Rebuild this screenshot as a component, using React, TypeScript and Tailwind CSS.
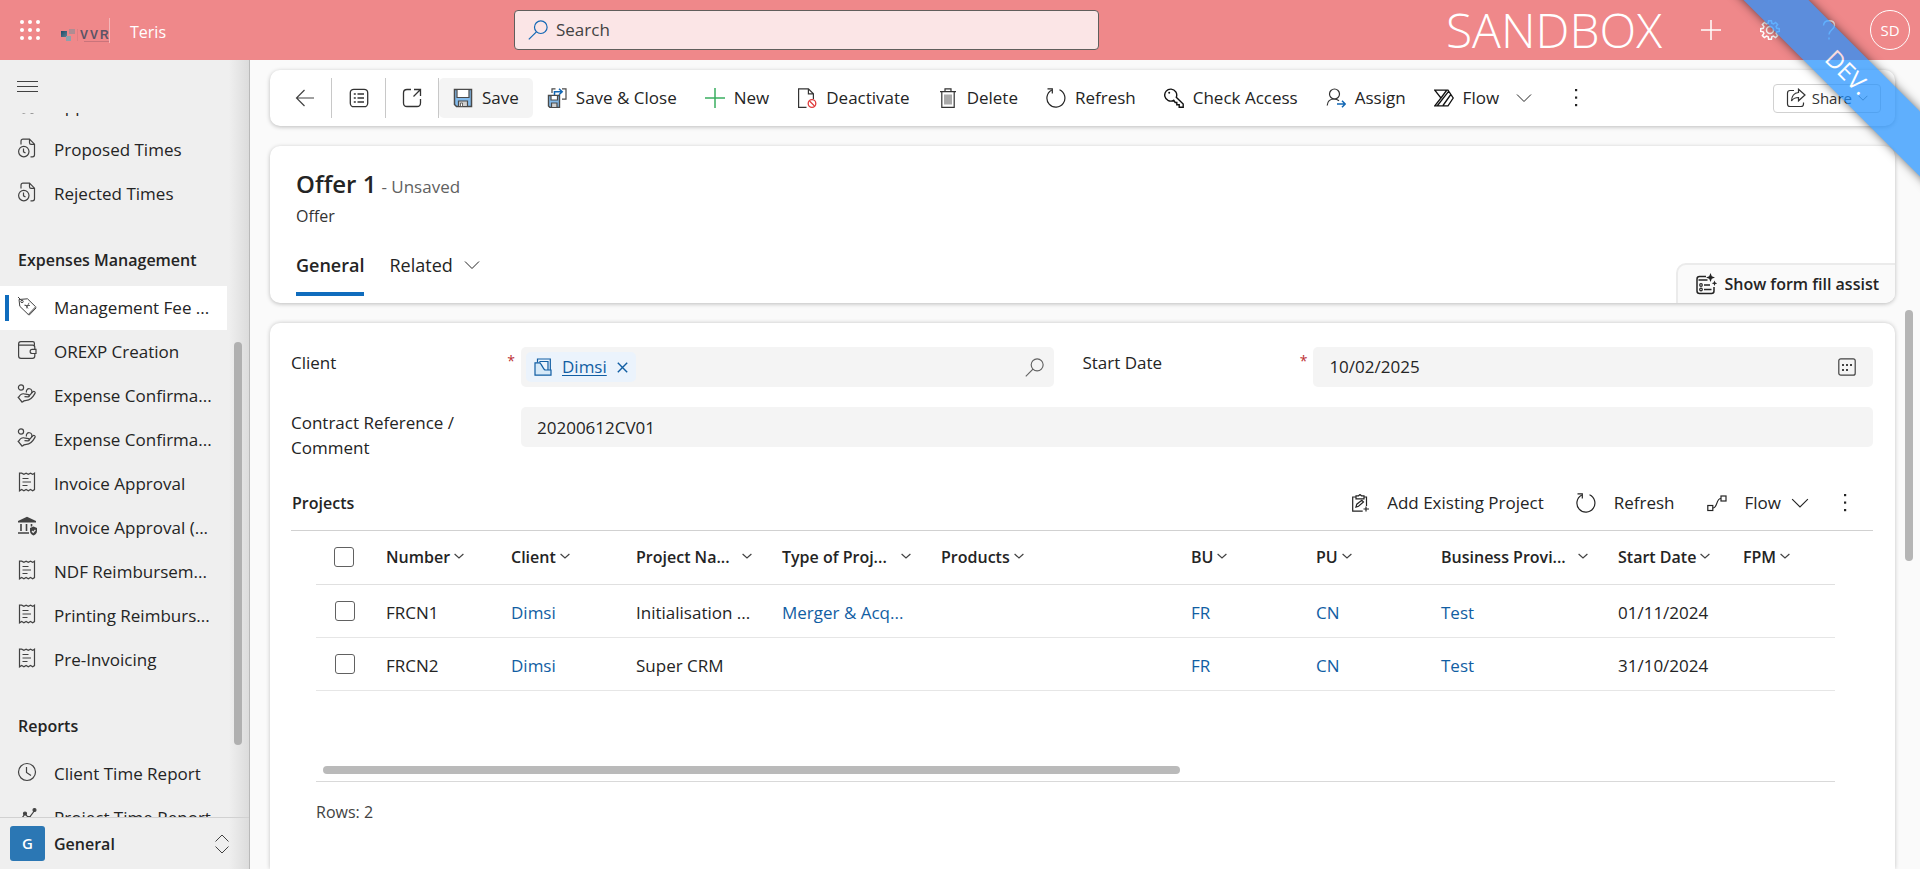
import { useState } from "react";
import type { ReactNode } from "react";

const Icon = ({
  children,
  className = "size-5",
  box = 20,
}: {
  children: ReactNode;
  className?: string;
  box?: number;
}) => (
  <svg
    viewBox={`0 0 ${box} ${box}`}
    className={`shrink-0 ${className}`}
    fill="none"
    stroke="currentColor"
    strokeWidth="1.2"
    aria-hidden="true"
  >
    {children}
  </svg>
);

const TimeDocIcon = () => (
  <Icon>
    <path d="M4 6.5V3.2C4 2 4.8 1.2 6 1.2h6.5l5 5v10.6c0 1.2-.8 2-2 2h-2M12.500 1.500v3.200c0 1 .6 1.600 1.600 1.600h3.200" />
    <circle cx="6.800" cy="13.600" r="5.200" />
    <path d="M6.500 10.500v3.300l2 1.200" />
  </Icon>
);

const TagIcon = () => (
  <Icon>
    <path d="M2 3.500 10.500 2.800l8.200 8-7.400 7.700-8.500-8.200L2 3.500ZM1 1l3.500 3.500M11.300 18.500l1 .5 7-7.300" strokeWidth="1" />
    <circle cx="5" cy="5.500" r="1.200" strokeWidth="1" />
    <path d="M7.500 9.500h5.500M8 8.500l3 4M12 6.800l-2.500 5.500" strokeWidth=".8" />
  </Icon>
);

const WalletIcon = () => (
  <Icon>
    <path d="M1.600 4c0-1.400.8-2.400 2.200-2.400h12c1 0 1.600.6 1.600 1.600v2M1.600 4v12c0 1.500.9 2.400 2.400 2.400h11.500c1.500 0 2.300-.8 2.300-2.300v-2.600M1.600 5.200h14c1.500 0 2.200.8 2.200 2.200v2" />
    <path d="M19 9.400h-3.800a2 2 0 0 0 0 4.100H19Z" />
  </Icon>
);

const HandCoinsIcon = () => (
  <Icon>
    <circle cx="4" cy="3.500" r="2.600" />
    <path d="M9.500 8.500a2.800 2.800 0 1 1 5 .5" />
    <path d="M1.500 13.500c1.500-2.800 3.300-4.200 5.700-3.600l4.300.8c1.500.4 1.200 2.300-.4 2.200l-3.600-.2M11.500 12.500l4.300-4.700c1.200-1.100 2.900.1 2.200 1.600-2 3.600-4.600 6.900-8.600 6.900-2 0-3 .2-4 1.800M.8 12.800l4.600 5.700" />
  </Icon>
);

const InvoiceIcon = () => (
  <Icon>
    <path d="M2.500 1.200v17.600l2.200-1.400 2.200 1.400 2.200-1.400 2.200 1.400 2.200-1.400 2.200 1.400 1.800-1.200V1.200l-1.800 1.200-2.200-1.200-2.200 1.200-2.200-1.200-2.200 1.200-2.200-1.200Z" />
    <path d="M5.500 6.500h6M5.500 10h8.500M5.500 13.500h5" />
  </Icon>
);

const BankIcon = () => (
  <Icon>
    <path d="M10 .8 1 5v1.500h18V5Z" fill="currentColor" stroke="none" />
    <path d="M4 8v7M9.500 8v7M14.500 8v2.500M1 17h11" strokeWidth="1.600" />
    <path d="M16.500 10.500 20 12v3c0 2.200-1.500 3.800-3.500 4.500C14.500 18.800 13 17.200 13 15v-3Z" fill="currentColor" stroke="none" />
    <path d="m15 15 1.200 1.300 2.200-2.500" stroke="#efefef" />
  </Icon>
);

const ClockIcon = () => (
  <Icon>
    <circle cx="10" cy="10" r="8.500" />
    <path d="M9.500 5v5.500l4.500 3" />
  </Icon>
);

const ChartIcon = () => (
  <Icon>
    <path d="M2 16 8 8l4 4 6-8" />
    <circle cx="8" cy="7.500" r="1.500" fill="currentColor" />
    <circle cx="17.500" cy="4" r="1.500" fill="currentColor" />
    <circle cx="12" cy="12" r="1.500" fill="currentColor" />
  </Icon>
);

const ChevronDown = ({ className = "size-4" }: { className?: string }) => (
  <Icon className={className} box={16}>
    <path d="m1 4.500 7 7 7-7" strokeWidth="1" />
  </Icon>
);

const SortChevron = () => (
  <Icon className="size-[10px]" box={10}>
    <path d="m.6 2 4.400 4 4.400-4" stroke="#424242" />
  </Icon>
);

const Dots = () => (
  <Icon className="size-5">
    <g fill="currentColor" stroke="none">
      <rect x="9" y="1" width="2.200" height="2.200" />
      <rect x="9" y="8.500" width="2.200" height="2.200" />
      <rect x="9" y="16" width="2.200" height="2.200" />
    </g>
  </Icon>
);

const SaveIcon = () => (
  <Icon>
    <path d="M1.500 1.500h17v17h-15l-2-2Z" fill="#83bbec" stroke="#4a4a4a" strokeWidth="1.500" />
    <path d="M4 1.500h12v8H4Z" fill="#fff" stroke="#4a4a4a" />
    <path d="M5.500 13h9v5.500h-9Z" fill="#d0d0d0" stroke="#4a4a4a" />
    <path d="M7.500 15h2v3.500h-2Z" fill="#fff" stroke="#4a4a4a" strokeWidth=".8" />
  </Icon>
);

const SaveCloseIcon = () => (
  <Icon>
    <path d="M1.500 7.500h11v12H3l-1.500-1.500Z" fill="#83bbec" stroke="#4a4a4a" strokeWidth="1.400" />
    <path d="M4 7.500h6.500v4.500H4Z" fill="#fff" stroke="#4a4a4a" />
    <path d="M4.500 15h5.500v4.500H4.500Z" fill="#d0d0d0" stroke="#4a4a4a" />
    <path d="M5 5V.8h3.500M15 .8h4v10.400h-4" stroke="#4a4a4a" />
    <path d="M7.500 7V3.800H15M12 .8l3.200 3L12 6.800" stroke="#1267b4" strokeWidth="1.500" />
  </Icon>
);

const PlusIcon = () => (
  <Icon>
    <path d="M10 0v20M0 10h20" stroke="#3aae60" strokeWidth="1.500" />
  </Icon>
);

const DeactivateIcon = () => (
  <Icon>
    <path d="M9.500 19.400H1.600V.8h9.800l5 5V11M11.400.8v5h5" stroke="#333" />
    <circle cx="15" cy="15.500" r="3.800" stroke="#e03c3c" strokeWidth="1.300" />
    <path d="m12.500 13 5 5" stroke="#e03c3c" strokeWidth="1.300" />
  </Icon>
);

const DeleteIcon = () => (
  <Icon>
    <path d="M2 3.600h16M7 3.500V.8h6v2.700M3.800 3.600v15.800h12.400V3.600" stroke="#333" />
    <path d="M7 6.500v10M9 6.500v10M11 6.500v10M13 6.500v10" stroke="#555" strokeWidth="1" />
  </Icon>
);

const RefreshIcon = () => (
  <Icon>
    <path d="M13.500 1.800a9 9 0 1 1-8 .4M1.500.8h4.800v4.800" />
  </Icon>
);

const KeyIcon = () => (
  <Icon>
    <path
      d="M9.700 12.300A6 6 0 1 1 12.300 9.300L19.200 16v3.200h-4v-2.400h-2.400v-2.300h-1.600Z"
      stroke="#111"
      strokeWidth="1.400"
    />
    <circle cx="5.200" cy="4.800" r="1" fill="#111" stroke="none" />
  </Icon>
);

const AssignIcon = () => (
  <Icon>
    <circle cx="8.500" cy="6" r="5" stroke="#333" />
    <path d="M1.200 17.500c.3-4 3-6.500 7-6.500 2 0 3.500.6 4.800 1.800" stroke="#333" />
    <path d="M11 16h8M16 12.700l3.200 3.300-3.200 3.300" stroke="#1267b4" strokeWidth="1.500" />
  </Icon>
);

const FlowIcon = () => (
  <Icon>
    <path
      d="M.8 2.200h13.200l5.200 7.800-5.200 7.800H.8L7 10ZM7 10l5.500-7.500M3.500 17.500 15 2.800M9 17.500l7.800-11"
      stroke="#111"
      strokeWidth="1.300"
    />
  </Icon>
);

const ShareIcon = () => (
  <Icon>
    <path d="M8 2.500H4c-1.500 0-2.500 1-2.500 2.500v11c0 1.500 1 2.500 2.500 2.500h11c1.500 0 2.500-1 2.500-2.500v-1.500" />
    <path d="M12.500 1.200 19 7l-6.500 5.800V9.500c-3.500 0-5.500 1-7 3.500.2-5 2.500-8 7-8.500Z" />
  </Icon>
);

const FormAssistIcon = () => (
  <Icon className="size-[22px]" box={22}>
    <path d="M11 3.500H4.500c-1.500 0-2.500 1-2.500 2.500v12c0 1.500 1 2.500 2.500 2.500h12c1.500 0 2.500-1 2.500-2.500v-4M3.500 7h9" strokeWidth="1.500" />
    <path d="M9 12h6M9 16.500h7.500" strokeWidth="1.500" />
    <circle cx="6" cy="12" r="1.300" />
    <circle cx="6" cy="16.500" r="1.300" />
    <path d="m15.500 0 1.300 3.200L20 4.500l-3.200 1.300L15.500 9l-1.300-3.200L11 4.500l3.200-1.300ZM19.500 7.500l.8 2 2 .8-2 .8-.8 2-.8-2-2-.8 2-.8Z" fill="currentColor" stroke="none" />
  </Icon>
);

const LookupIcon = ({ className }: { className?: string }) => (
  <Icon className={className}>
    <circle cx="12.800" cy="7.200" r="6.300" />
    <path d="M8.400 11.800.8 19.400" />
  </Icon>
);

const EntityIcon = () => (
  <Icon className="size-[18px]" box={18}>
    <path d="M3.500 4.500V1h12.800v11M6 4.500v-1h8v8.500" />
    <path d="M1 4.800h4.500C7.500 4.800 9 12 11.500 12H17v5.200H1Z" fill="#d6e9f8" />
  </Icon>
);

const CalendarIcon = () => (
  <Icon className="size-[18px]" box={18}>
    <rect x=".8" y=".8" width="16.400" height="16.400" rx="2" />
    <g fill="currentColor" stroke="none">
      <rect x="4" y="6" width="2" height="2" />
      <rect x="8" y="6" width="2" height="2" />
      <rect x="12" y="6" width="2" height="2" />
      <rect x="4" y="11" width="2" height="2" />
      <rect x="8" y="11" width="2" height="2" />
    </g>
  </Icon>
);

const AddExistingIcon = () => (
  <Icon className="size-[18px]" box={18}>
    <path d="M5 3H1.700v14.200h10M13 3h2.500v9M5 1.800v3h8v-3h-2.500L9 .5 7.500 1.800Z" />
    <path d="m5 13 .8-2.800 5-4 1.700 1.800-5 4.200ZM15 12.500v5M12.500 15H18" />
  </Icon>
);

const FlowLineIcon = () => (
  <Icon>
    <rect x=".8" y="12.500" width="5" height="5" />
    <rect x="14" y="3" width="5" height="5" />
    <path d="M5.800 15c5 0 3-9.500 8.200-9.500" />
  </Icon>
);

const GearIcon = () => (
  <Icon>
    <circle cx="10" cy="10" r="3.500" strokeWidth="1.500" />
    <path
      d="M8.600.8h2.800l.4 2.500 1.700.7 2.100-1.500 2 2-1.500 2.100.7 1.700 2.500.4v2.700l-2.500.4-.7 1.700 1.500 2.100-2 2-2.100-1.500-1.700.7-.4 2.500H8.600l-.4-2.500-1.700-.7-2.100 1.500-2-2 1.500-2.100-.7-1.700-2.500-.4V8.700l2.500-.4.700-1.700-1.500-2.100 2-2L6.500 4l1.700-.7Z"
      strokeWidth="1.500"
    />
  </Icon>
);

const timeItems = [
  { label: "Approved Times", icon: <TimeDocIcon /> },
  { label: "Proposed Times", icon: <TimeDocIcon /> },
  { label: "Rejected Times", icon: <TimeDocIcon /> },
];

const expenseItems = [
  { label: "Management Fee ...", icon: <TagIcon />, active: true },
  { label: "OREXP Creation", icon: <WalletIcon /> },
  { label: "Expense Confirma...", icon: <HandCoinsIcon /> },
  { label: "Expense Confirma...", icon: <HandCoinsIcon /> },
  { label: "Invoice Approval", icon: <InvoiceIcon /> },
  { label: "Invoice Approval (...", icon: <BankIcon /> },
  { label: "NDF Reimbursem...", icon: <InvoiceIcon /> },
  { label: "Printing Reimburs...", icon: <InvoiceIcon /> },
  { label: "Pre-Invoicing", icon: <InvoiceIcon /> },
];

const reportItems = [
  { label: "Client Time Report", icon: <ClockIcon /> },
  { label: "Project Time Report", icon: <ChartIcon /> },
];

const commands = [
  { label: "Save", icon: <SaveIcon /> },
  { label: "Save & Close", icon: <SaveCloseIcon /> },
  { label: "New", icon: <PlusIcon /> },
  { label: "Deactivate", icon: <DeactivateIcon /> },
  { label: "Delete", icon: <DeleteIcon /> },
  { label: "Refresh", icon: <RefreshIcon /> },
  { label: "Check Access", icon: <KeyIcon /> },
  { label: "Assign", icon: <AssignIcon /> },
];

const columns = [
  { label: "Number", width: "w-[125px]" },
  { label: "Client", width: "w-[125px]" },
  { label: "Project Na...", width: "w-[146px]", cut: true },
  { label: "Type of Proj...", width: "w-[159px]", cut: true },
  { label: "Products", width: "w-[250px]" },
  { label: "BU", width: "w-[125px]" },
  { label: "PU", width: "w-[125px]" },
  { label: "Business Provi...", width: "w-[177px]", cut: true },
  { label: "Start Date", width: "w-[125px]" },
  { label: "FPM", width: "" },
];

// column indexes whose cells are lookups
const linkColumns = [1, 3, 5, 6, 7];

const rows = [
  ["FRCN1", "Dimsi", "Initialisation ...", "Merger & Acq...", "", "FR", "CN", "Test", "01/11/2024", ""],
  ["FRCN2", "Dimsi", "Super CRM", "", "", "FR", "CN", "Test", "31/10/2024", ""],
];

const NavItem = ({ label, icon, active }: { label: string; icon: ReactNode; active?: boolean }) => (
  <li>
    <a
      href="#"
      className={`relative flex h-11 items-center gap-[17px] pl-[17px] whitespace-nowrap ${
        active ? "bg-white" : ""
      }`}
    >
      {active && <span className="absolute left-[5px] top-[9px] h-[26px] w-1 bg-[#0f6cbd]" />}
      <span className="pb-1 text-[#424242]">{icon}</span>
      {label}
    </a>
  </li>
);

const TopBar = () => (
  <header className="flex h-[60px] shrink-0 items-center bg-[#ef888a] text-white">
    <div className="flex w-[514px] shrink-0 items-center">
      <button aria-label="App launcher" className="ml-5">
        <svg viewBox="0 0 20 20" className="size-5" fill="currentColor">
          {[2, 10, 18].map((y) =>
            [2, 10, 18].map((x) => <circle key={`${x}-${y}`} cx={x} cy={y} r="2" />)
          )}
        </svg>
      </button>
      <div className="ml-5 flex h-[25px] items-end border-r border-white/40">
        <svg viewBox="0 0 49 20" className="h-5 w-[49px]">
          <defs>
            <linearGradient id="tile" x1="0" y1="0" x2="1" y2="1">
              <stop offset="0" stopColor="#1d4a66" />
              <stop offset="1" stopColor="#5f8093" />
            </linearGradient>
          </defs>
          <rect x="1" y="8" width="6" height="6" fill="url(#tile)" />
          <rect x="9" y="6" width="6" height="5" fill="#b08c92" />
          <rect x="6" y="13" width="5" height="5" fill="#8fa0ab" />
          <path d="M17.500 6v12" stroke="#df7f83" />
          <g fontSize="12" fill="#5b5466" fontFamily="Liberation Sans, sans-serif" fontWeight="700">
            <text x="20" y="16">V</text>
            <text x="30" y="16">V</text>
            <text x="40" y="16">R</text>
          </g>
          <path d="M24 18.500h25" stroke="#c9747b" />
        </svg>
      </div>
      <span className="ml-5 pt-1 text-base">Teris</span>
    </div>
    <label className="flex h-10 w-[585px] items-center gap-2 rounded-sm border border-[#605e5c] bg-[#fbe5e6] pl-[13px]">
      <LookupIcon className="size-5 text-[#1267b4]" />
      <input
        type="search"
        aria-label="Search"
        placeholder="Search"
        className="flex-1 bg-transparent text-[17px] text-[#242424] outline-none placeholder:text-[#424242]"
      />
    </label>
    <div className="flex flex-1 items-center justify-end pr-[10px]">
      <span className="mr-[39px] text-5xl font-light leading-[60px]">SANDBOX</span>
      <button aria-label="New record" className="mr-[39px]">
        <Icon>
          <path d="M10 0v20M0 10h20" strokeWidth="1.500" />
        </Icon>
      </button>
      <button aria-label="Settings" className="mr-[39px]">
        <GearIcon />
      </button>
      <button aria-label="Help" className="mr-[31px]">
        <Icon>
          <path d="M4.500 5.500C4.800 2.500 7 .8 10 .8c3.200 0 5.500 1.800 5.500 4.600 0 4.200-5.500 4.600-5.500 9.100M10 17.500v2" strokeWidth="1.400" />
        </Icon>
      </button>
      <button aria-label="Account" className="size-10 rounded-full border border-white text-[15px]">
        SD
      </button>
    </div>
  </header>
);

const Sidebar = () => (
  <aside className="flex w-[250px] shrink-0 flex-col border-r border-[#b9b9b9] bg-[#efefef] bg-[linear-gradient(to_left,#dcdcdc,#efefef_20px)]">
    <button aria-label="Collapse menu" className="ml-[17px] mt-[15px] w-fit">
      <svg viewBox="0 0 21 24" className="h-6 w-[21px]" stroke="#424242" aria-hidden="true">
        <path d="M0 6.500h21M0 11.500h21M0 16.500h21" />
      </svg>
    </button>
    <div className="mt-[14px] flex min-h-0 flex-1">
      <nav className="w-[227px] overflow-hidden text-[17px]">
        <ul className="-mt-[29px]">
          {timeItems.map((item) => (
            <NavItem key={item.label} {...item} />
          ))}
        </ul>
        <h2 className="flex h-[70px] items-end pb-[14px] pl-[18px] text-base font-semibold">
          Expenses Management
        </h2>
        <ul>
          {expenseItems.map((item, i) => (
            <NavItem key={i} {...item} />
          ))}
        </ul>
        <h2 className="flex h-[70px] items-end pb-[14px] pl-[18px] text-base font-semibold">Reports</h2>
        <ul>
          {reportItems.map((item) => (
            <NavItem key={item.label} {...item} />
          ))}
        </ul>
      </nav>
      <div className="ml-[7px] mt-[229px] h-[403px] w-2 rounded-full bg-[#b0b0b0]" />
    </div>
    <button className="flex h-[52px] shrink-0 items-center border-t border-[#d1d1d1] pl-[10px] pr-[19px] text-base font-semibold">
      <span className="flex size-[35px] items-center justify-center rounded-[3px] bg-[#2b77b4] text-[15px] text-white">
        G
      </span>
      <span className="ml-[9px] flex-1 text-left">General</span>
      <svg viewBox="0 0 16 20" className="h-5 w-4" fill="none" stroke="#424242" aria-hidden="true">
        <path d="m1.500 7.500 6.500-6.500 6.500 6.500M1.500 12.500l6.500 6.500 6.500-6.500" />
      </svg>
    </button>
  </aside>
);

const CommandBar = () => (
  <div className="flex h-14 shrink-0 items-center rounded-[10px] bg-white pl-2 pr-[14px] text-[17px] shadow-[0_1px_4px_rgba(0,0,0,0.25)]">
    <button aria-label="Back" className="flex h-10 w-[54px] items-center justify-center border-r border-[#c8c8c8] text-[#424242]">
      <Icon>
        <path d="M19 10H1.500M9.500 2 1.500 10l8 8" />
      </Icon>
    </button>
    <button aria-label="Show list" className="flex h-10 w-[54px] items-center justify-center border-r border-[#c8c8c8] text-[#333]">
      <Icon>
        <rect x="1.300" y="1.300" width="17.400" height="17.400" rx="3.500" strokeWidth="1.300" />
        <path d="M8.500 6h6.500M8.500 10h6.500M8.500 14h6.500M4.800 6h2M4.800 10h2M4.800 14h2" strokeWidth="1.300" />
      </Icon>
    </button>
    <button aria-label="Open in new window" className="flex h-10 w-[53px] items-center justify-center border-r border-[#c8c8c8] text-[#333]">
      <Icon>
        <path d="M9 1.500H5C2.800 1.500 1.500 2.800 1.500 5v10c0 2.200 1.300 3.500 3.500 3.500h10c2.200 0 3.500-1.300 3.500-3.500v-4M12 1.500h6.500V8M18.500 1.500 11.500 8.500" strokeWidth="1.300" />
      </Icon>
    </button>
    {commands.map((c, i) => (
      <button
        key={c.label}
        className={`flex h-10 items-center gap-[9px] whitespace-nowrap px-[14px] ${
          i === 0 ? "rounded-[5px] bg-[#f4f4f4]" : ""
        }`}
      >
        {c.icon}
        {c.label}
      </button>
    ))}
    <button className="flex h-10 items-center gap-[9px] px-[14px]">
      <FlowIcon />
      Flow
      <ChevronDown className="ml-2 size-4" />
    </button>
    <button aria-label="More commands" className="ml-5">
      <Dots />
    </button>
    <button className="ml-auto flex h-[29px] items-center gap-[6px] rounded border border-[#d1d1d1] px-3 text-[15px] text-[#333]">
      <ShareIcon />
      Share
      <ChevronDown className="size-[10px]" />
    </button>
  </div>
);

const RecordHeader = () => (
  <section className="relative mt-5 h-[157px] shrink-0 overflow-hidden rounded-[10px] bg-white pl-[26px] pt-[22px] shadow-[0_1px_4px_rgba(0,0,0,0.25)]">
    <div className="flex items-baseline gap-[5px]">
      <h1 className="text-2xl font-semibold leading-8">Offer 1</h1>
      <span className="text-[17px] text-[#616161]">- Unsaved</span>
    </div>
    <p className="text-base font-medium leading-8 text-[#333]">Offer</p>
    <div role="tablist" className="mt-[18px] flex items-start gap-[25px] text-lg">
      <button role="tab" aria-selected="true" className="h-[46px] border-b-4 border-[#0f6cbd] pb-3 font-semibold">
        General
      </button>
      <button role="tab" aria-selected="false" className="flex h-[46px] items-center gap-[11px] pb-4">
        Related
        <ChevronDown />
      </button>
    </div>
    <button className="absolute bottom-0 right-0 flex h-10 items-center gap-[7px] rounded-tl-[10px] border-l-2 border-t-2 border-[#ebebeb] bg-[#fafafa] pl-[17px] pr-[16px] text-base font-semibold">
      <FormAssistIcon />
      Show form fill assist
    </button>
  </section>
);

const ProjectsGrid = () => {
  const [selected, setSelected] = useState<number[]>([]);

  const toggle = (i: number) =>
    setSelected(selected.includes(i) ? selected.filter((s) => s !== i) : [...selected, i]);

  const checkbox = "block size-5 appearance-none rounded-[3px] border border-[#616161] bg-white checked:bg-[#0f6cbd]";

  return (
    <section className="mt-4">
      <div className="flex h-[55px] items-center border-b border-[#d1d1d1] pl-px text-[17px] text-[#242424]">
        <h2 className="flex-1 text-base font-semibold">Projects</h2>
        <button className="flex items-center gap-[18px] px-4">
          <AddExistingIcon />
          Add Existing Project
        </button>
        <button className="flex items-center gap-[18px] px-4">
          <RefreshIcon />
          Refresh
        </button>
        <button className="flex items-center gap-[18px] pl-4">
          <FlowLineIcon />
          Flow
          <ChevronDown className="-ml-2 size-[18px]" />
        </button>
        <button aria-label="More commands" className="ml-[26px] mr-[18px]">
          <Dots />
        </button>
      </div>
      <div className="ml-[25px] mr-[38px]">
        <table className="w-full table-fixed">
          <thead className="text-base">
            <tr className="h-[53px] border-b border-[#e0e0e0]">
              <th className="w-[55px] pl-[18px]">
                <input
                  type="checkbox"
                  aria-label="Select all rows"
                  className={checkbox}
                  checked={selected.length === rows.length}
                  onChange={(e) => setSelected(e.target.checked ? rows.map((_, i) => i) : [])}
                />
              </th>
              {columns.map((c) => (
                <th key={c.label} className={`pl-[15px] text-left font-semibold ${c.width}`}>
                  <button className={`flex w-full items-center whitespace-nowrap ${c.cut ? "justify-between pr-[15px]" : "gap-1"}`}>
                    {c.label}
                    <SortChevron />
                  </button>
                </th>
              ))}
            </tr>
          </thead>
          <tbody className="text-[17px]">
            {rows.map((row, r) => (
              <tr key={row[0]} className="h-[53px] border-b border-[#e6e6e6]">
                <td className="pl-[19px]">
                  <input
                    type="checkbox"
                    aria-label={`Select ${row[0]}`}
                    className={checkbox}
                    checked={selected.includes(r)}
                    onChange={() => toggle(r)}
                  />
                </td>
                {row.map((cell, i) => (
                  <td key={i} className="whitespace-nowrap pl-[15px] pt-1">
                    {linkColumns.includes(i) && cell ? (
                      <a href="#" className="text-[#115ea3]">
                        {cell}
                      </a>
                    ) : (
                      cell
                    )}
                  </td>
                ))}
              </tr>
            ))}
          </tbody>
        </table>
        <div className="mt-[75px] border-b border-[#d9d9d9] pb-[7px] pl-[7px] pr-[9px]">
          <div className="h-2 w-[57%] rounded-full bg-[#bababa]" />
        </div>
        <p className="mt-[18px] text-base text-[#424242]">Rows: 2</p>
      </div>
    </section>
  );
};

const OfferForm = () => (
  <section className="mt-5 flex-1 rounded-t-[10px] bg-white pl-[21px] pr-[22px] pt-6 text-[17px] shadow-[0_0_4px_rgba(0,0,0,0.22)]">
    <div className="flex">
      <div className="flex flex-[28]">
        <label htmlFor="client" className="flex w-[230px] justify-between pr-[6px] leading-8">
          Client <span className="text-sm leading-7 text-[#bc2f32]">*</span>
        </label>
        <div className="flex h-10 flex-1 items-center rounded-[5px] bg-[#f4f4f4] pl-[5px] pr-[10px]">
          <span className="flex h-[30px] items-center gap-[10px] rounded-[5px] bg-[#ebf3fc] px-2 text-[#115ea3]">
            <EntityIcon />
            <a href="#" className="underline underline-offset-2">
              Dimsi
            </a>
            <button aria-label="Remove Dimsi">
              <Icon className="size-[11px]" box={11}>
                <path d="m.8.8 9.400 9.400M10.200.8.8 10.200" strokeWidth="1.400" />
              </Icon>
            </button>
          </span>
          <input id="client" className="w-0 flex-1 bg-transparent outline-none" />
          <LookupIcon className="size-[19px] text-[#616161]" />
        </div>
      </div>
      <div className="ml-7 flex flex-[29]">
        <label htmlFor="start-date" className="flex w-[231px] justify-between pr-[6px] leading-8">
          Start Date <span className="text-sm leading-7 text-[#bc2f32]">*</span>
        </label>
        <div className="flex h-10 flex-1 items-center rounded-[5px] bg-[#f4f4f4] pl-4 pr-[17px]">
          <input
            id="start-date"
            defaultValue="10/02/2025"
            className="w-0 flex-1 bg-transparent outline-none"
          />
          <button aria-label="Open calendar" className="text-[#424242]">
            <CalendarIcon />
          </button>
        </div>
      </div>
    </div>
    <div className="mt-5 flex">
      <label htmlFor="contract" className="w-[230px] pr-10 pt-[3px] leading-[25px]">
        Contract Reference / Comment
      </label>
      <input
        id="contract"
        defaultValue="20200612CV01"
        className="h-10 flex-1 rounded-[5px] bg-[#f4f4f4] px-4 outline-none"
      />
    </div>
    <ProjectsGrid />
  </section>
);

const DevRibbon = () => (
  <div className="pointer-events-none absolute right-0 top-0 size-[200px] overflow-hidden">
    <div className="absolute -right-[78px] top-[49px] flex h-[46px] w-[300px] rotate-45 items-center justify-center bg-[#1e90ff] text-2xl font-medium text-white opacity-70 shadow-[0_0_10px_rgba(0,0,0,0.8)]">
      DEV.
    </div>
  </div>
);

export default function App() {
  return (
    <div className="relative flex h-screen flex-col overflow-hidden bg-[#fafafa] font-['Open_Sans',sans-serif] text-[#242424]">
      <TopBar />
      <div className="flex min-h-0 flex-1">
        <Sidebar />
        <main className="flex min-w-0 flex-1 flex-col pl-5 pt-[10px]">
          <CommandBar />
          <RecordHeader />
          <OfferForm />
        </main>
        <div className="w-[25px] shrink-0 pl-[10px] pt-[250px]">
          <div className="h-[251px] w-2 rounded-full bg-[#b5b5b5]" />
        </div>
      </div>
      <DevRibbon />
    </div>
  );
}
